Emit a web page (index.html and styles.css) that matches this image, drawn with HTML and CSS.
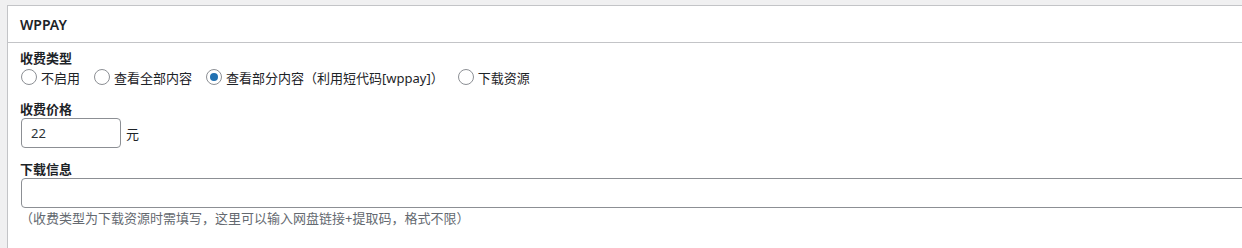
FILE: index.html
```html
<!DOCTYPE html>
<html lang="zh-CN">
  <head>
    <meta charset="utf-8">
    <title>WPPAY</title>
    <link rel="stylesheet" href="styles.css">
  </head>
  <body>
    <div class="postbox">
      <div class="postbox-header">
        <h2>WPPAY</h2>
      </div>
      <div class="inside">
        <div class="field">
          <label class="field-title">收费类型</label>
          <div class="radios">
            <label class="radio"><input type="radio" name="wppay_type" value="0">不启用</label>
            <label class="radio"><input type="radio" name="wppay_type" value="1">查看全部内容</label>
            <label class="radio"><input type="radio" name="wppay_type" value="2" checked>查看部分内容（利用短代码[wppay]）</label>
            <label class="radio"><input type="radio" name="wppay_type" value="3">下载资源</label>
          </div>
        </div>
        <div class="field price">
          <label class="field-title" for="wppay_price">收费价格</label>
          <div class="price-row">
            <input type="text" id="wppay_price" class="small-input" value="22">
            <span class="unit">元</span>
          </div>
        </div>
        <div class="field down">
          <label class="field-title" for="wppay_down">下载信息</label>
          <input type="text" id="wppay_down" class="wide-input">
          <p class="desc">（收费类型为下载资源时需填写，这里可以输入网盘链接+提取码，格式不限）</p>
        </div>
      </div>
    </div>
  </body>
</html>
```

FILE: styles.css
```css
/* 页面背景 */
body {
  margin: 0;
  padding: 5px 0 0 7px;
  background: #f0f0f1;
  overflow: hidden;
  font-family: "Noto Sans", "Noto Sans CJK SC", sans-serif;
  font-size: 13px;
  color: #1d2327;
}
/* 外框, 右边和下边被窗口截掉 */
.postbox {
  background: #fff;
  border: 1px solid #c3c4c7;
  border-right: none;
  border-bottom: none;
  height: 242px;
  overflow: hidden;
}
.postbox-header {
  height: 36px;
  border-bottom: 1px solid #c3c4c7;
  display: flex;
  align-items: center;
  padding-left: 12px;
}
.postbox-header h2 {
  margin: 0;
  font-size: 14px;
  font-weight: 600;
}
.inside {
  padding: 6px 0 0 12px;
}
.field-title {
  display: block;
  font-weight: 700;
  line-height: 18px;
}
.radios {
  display: flex;
  align-items: center;
  height: 18px;
  margin-top: 1px;
}
.radio {
  display: flex;
  align-items: center;
  margin-right: 13px;
}
/* 单选框 */
.radio input {
  appearance: none;
  width: 16px;
  height: 16px;
  margin: 0 4px 0 1px;
  border: 1px solid #8c8f94;
  border-radius: 50%;
  background: #fff;
  position: relative;
}
.radio input:checked::before {
  content: "";
  position: absolute;
  top: 3px;
  left: 3px;
  width: 8px;
  height: 8px;
  border-radius: 50%;
  background: #2271b1;
}
.price {
  margin-top: 14px;
}
.price-row {
  display: flex;
  align-items: center;
}
.small-input {
  box-sizing: border-box;
  width: 100px;
  height: 30px;
  margin-left: 1px;
  padding: 0 9px;
  border: 1px solid #8c8f94;
  border-radius: 4px;
  font: inherit;
  color: #2c3338;
}
.unit {
  margin-left: 5px;
}
.down {
  margin-top: 12px;
}
/* 输入框右边超出窗口 */
.wide-input {
  display: block;
  box-sizing: border-box;
  width: calc(100% + 20px);
  height: 30px;
  margin: 0 0 0 1px;
  border: 1px solid #8c8f94;
  border-radius: 4px;
}
.desc {
  margin: 1px 0 0 0;
  line-height: 18px;
  color: #646970;
}
```
